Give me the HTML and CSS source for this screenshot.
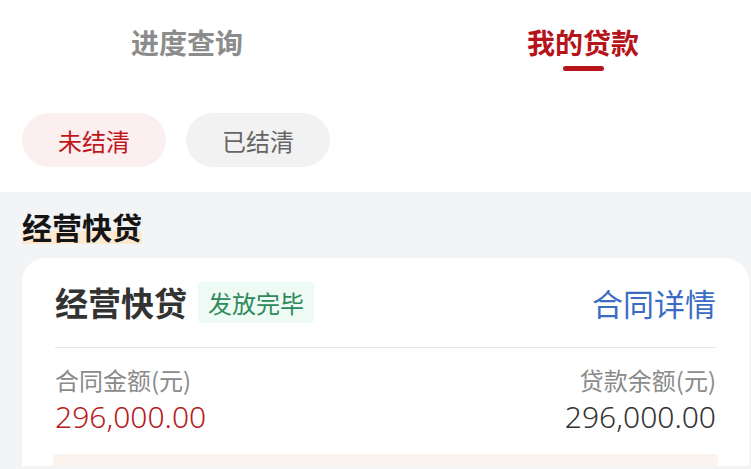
FILE: index.html
```html
<!DOCTYPE html>
<html lang="zh-CN">
<head>
<meta charset="utf-8">
<link rel="stylesheet" href="styles.css">
</head>
<body>
<div class="page">
  <div class="tabs">
    <div class="tab"><span class="tab-text">进度查询</span></div>
    <div class="tab active"><span class="tab-text">我的贷款</span><span class="tab-line"></span></div>
  </div>
  <div class="filters">
    <div class="pill pill-on">未结清</div>
    <div class="pill">已结清</div>
  </div>
  <div class="section">
    <div class="section-title"><span class="hl">经营快贷</span></div>
    <div class="card">
      <div class="card-head">
        <div class="card-title">经营快贷</div>
        <div class="tag">发放完毕</div>
        <div class="link">合同详情</div>
      </div>
      <div class="amounts">
        <div class="amt">
          <div class="amt-label">合同金额(元)</div>
          <div class="amt-value red">296,000.00</div>
        </div>
        <div class="amt right">
          <div class="amt-label">贷款余额(元)</div>
          <div class="amt-value">296,000.00</div>
        </div>
      </div>
      <div class="notice"></div>
    </div>
  </div>
</div>
</body>
</html>
```
FILE: styles.css
```css
* { box-sizing: border-box; }
html, body { margin: 0; padding: 0; }
body {
  background: #ffffff;
  font-family: "Noto Sans CJK SC", "Noto Sans", sans-serif;
  width: 751px;
  height: 469px;
  overflow: hidden;
}
.page { width: 751px; }

.tabs {
  display: flex;
  height: 80px;
  padding-left: 107px;
  gap: 236px;
}
.tab {
  width: 160px;
  display: flex;
  flex-direction: column;
  align-items: center;
  padding-top: 22px;
}
.tab-text {
  font-size: 28px;
  line-height: 40px;
  font-weight: 700;
  color: #8c8c8c;
}
.tab.active .tab-text { color: #b5141b; }
.tab-line {
  margin-top: 4px;
  width: 41px;
  height: 5px;
  border-radius: 3px;
  background: #b5141b;
}

.filters {
  display: flex;
  gap: 20px;
  padding: 33px 22px 25px;
}
.pill {
  width: 144px;
  height: 54px;
  border-radius: 27px;
  background: #f2f2f2;
  color: #666666;
  font-size: 24px;
  display: flex;
  align-items: center;
  justify-content: center;
}
.pill-on {
  background: #fcefef;
  color: #c0161c;
}

.section {
  background: #f3f4f6;
  padding: 17px 0 0 22px;
  height: 277px;
}
.section-title {
  display: flex;
  height: 35px;
}
.hl {
  font-size: 30px;
  line-height: 35px;
  font-weight: 700;
  color: #151515;
  background: linear-gradient(to bottom, transparent 0, transparent 62%, #fde8d0 62%, #fde8d0 100%);
}

.card {
  margin-top: 14px;
  width: 727px;
  background: #ffffff;
  border-radius: 24px 24px 0 0;
  padding: 24px 33px 0 33px;
}
.card-head {
  display: flex;
  align-items: center;
  height: 66px;
  padding-bottom: 25px;
  border-bottom: 1px solid #e6e6e6;
}
.card-title {
  font-size: 33px;
  font-weight: 700;
  color: #333333;
  line-height: 41px;
}
.tag {
  margin-left: 11px;
  height: 41px;
  padding: 0 10px;
  background: #eefaf4;
  color: #2e8a5c;
  font-size: 24px;
  display: flex;
  align-items: center;
  border-radius: 4px;
}
.link {
  margin-left: auto;
  font-size: 31px;
  color: #3b6cc4;
  line-height: 41px;
}

.amounts {
  display: flex;
  justify-content: space-between;
  padding-top: 17px;
}
.amt.right { text-align: right; }
.amt-label {
  font-size: 24px;
  line-height: 30px;
  color: #8a8a8a;
}
.amt-value {
  margin-top: 3px;
  font-family: "Noto Sans", "Noto Sans CJK SC", sans-serif;
  font-size: 30px;
  line-height: 38px;
  font-weight: 300;
  color: #333333;
}
.amt-value.red { color: #b51c1f; }

.notice {
  margin-top: 18px;
  height: 12px;
  background: #fbf3ee;
  border-radius: 4px 4px 0 0;
  margin-left: -2px;
  margin-right: -2px;
}
```
